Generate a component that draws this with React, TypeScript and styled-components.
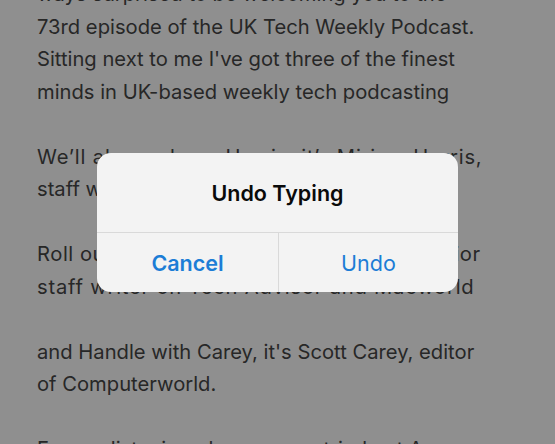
import React from "react";
import styled, { createGlobalStyle } from "styled-components";

const Global = createGlobalStyle`
  html, body { margin: 0; padding: 0; width: 555px; height: 444px; overflow: hidden; }
  body { background: #8e8e8e; font-family: Inter, "Noto Sans", sans-serif; }
`;

const Screen = styled.div`
  position: relative;
  width: 555px;
  height: 444px;
  overflow: hidden;
  background: #8f8f8f;
`;

const Document = styled.div`
  margin-top: -22px;
  padding: 0 20px 0 37px;
  font-size: 20.2px;
  line-height: 32.5px;
  color: #272727;
`;

const Line = styled.div<{ $track?: number }>`
  white-space: nowrap;
  height: 32.5px;
  letter-spacing: ${(p) => p.$track ?? 0}px;
`;

const Alert = styled.div`
  position: absolute;
  left: 97px;
  top: 153px;
  width: 361px;
  height: 139px;
  border-radius: 14px;
  background: #f3f3f3;
  display: flex;
  flex-direction: column;
  overflow: hidden;
`;

const Title = styled.div`
  height: 80px;
  display: flex;
  align-items: center;
  justify-content: center;
  font-size: 21.5px;
  font-weight: 600;
  color: #0a0a0a;
  border-bottom: 1px solid #d9d9d9;
  box-sizing: border-box;
`;

const Actions = styled.div`
  flex: 1;
  display: grid;
  grid-template-columns: 181px 1fr;
`;

const Action = styled.button<{ $bold?: boolean }>`
  border: 0;
  background: transparent;
  font-family: inherit;
  font-size: 21.5px;
  font-weight: ${(p) => (p.$bold ? 600 : 400)};
  color: #1c7dd6;
  padding: 0;
  display: flex;
  align-items: center;
  justify-content: center;
  & + & { border-left: 1px solid #d9d9d9; }
`;

const lines: { text: string; track?: number }[] = [
  { text: "ways surprised to be welcoming you to the" },
  { text: "73rd episode of the UK Tech Weekly Podcast." },
  { text: "Sitting next to me I've got three of the finest" },
  { text: "minds in UK-based weekly tech podcasting" },
  { text: "" },
  { text: "We’ll always have Harris, it’s Miriam Harris,", track: 0.82 },
  { text: "staff writer at Macworld" },
  { text: "" },
  { text: "Roll out the Painter, it’s Lewis Painter, senior", track: 0.54 },
  { text: "staff writer on Tech Advisor and Macworld", track: 0.78 },
  { text: "" },
  { text: "and Handle with Carey, it's Scott Carey, editor" },
  { text: "of Computerworld." },
  { text: "" },
  { text: "For our listening pleasure, we tried out A" },
];

export default function App() {
  return (
    <Screen>
      <Global />
      <Document>
        {lines.map((l, i) => (
          <Line key={i} $track={l.track}>
            {l.text || "\u00a0"}
          </Line>
        ))}
      </Document>
      <Alert>
        <Title>Undo Typing</Title>
        <Actions>
          <Action $bold>Cancel</Action>
          <Action>Undo</Action>
        </Actions>
      </Alert>
    </Screen>
  );
}
